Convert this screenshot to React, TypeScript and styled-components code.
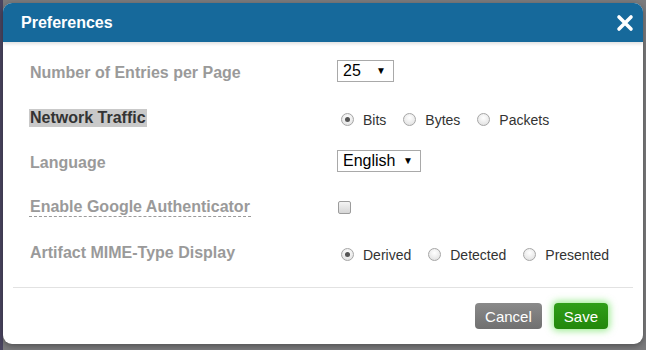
import React from "react";
import styled, { createGlobalStyle } from "styled-components";

const GlobalStyles = createGlobalStyle`
  html, body {
    margin: 0;
    padding: 0;
    background: #7b7b7d;
    font-family: "Liberation Sans", Arial, sans-serif;
  }
`;

const Backdrop = styled.div`
  width: 646px;
  height: 350px;
  padding: 3px;
  box-sizing: border-box;
  background: linear-gradient(to right, #4a4560 0, #4a4560 3px, #7b7b7d 3px);
`;

const Modal = styled.div`
  width: 640px;
  height: 341px;
  background: #ffffff;
  border-radius: 9px;
  display: flex;
  flex-direction: column;
  overflow: hidden;
  box-shadow: 0 2px 6px rgba(0, 0, 0, 0.35);
`;

const Header = styled.div`
  height: 39px;
  background: #16699b;
  display: flex;
  align-items: center;
  justify-content: space-between;
  padding: 0 8px 0 18px;
  box-shadow: 0 2px 3px rgba(0, 0, 0, 0.12);
`;

const Title = styled.h3`
  margin: 0;
  color: #ffffff;
  font-size: 16px;
  font-weight: bold;
`;

const CloseButton = styled.button`
  border: none;
  background: none;
  padding: 0;
  width: 20px;
  height: 20px;
  display: flex;
  align-items: center;
  justify-content: center;
  cursor: pointer;
`;

const Body = styled.div`
  padding: 8px 0 12px 26px;
  display: flex;
  flex-direction: column;
`;

const Row = styled.div`
  height: 45px;
  display: grid;
  grid-template-columns: 308px 1fr;
  align-items: center;
`;

const Label = styled.span<{ $highlight?: boolean; $dashed?: boolean }>`
  justify-self: start;
  font-size: 16px;
  font-weight: bold;
  color: ${(p) => (p.$highlight ? "#333333" : "#9a9a9a")};
  background: ${(p) => (p.$highlight ? "#c9c9c9" : "transparent")};
  padding: 0 1px;
  border-bottom: ${(p) => (p.$dashed ? "1px dashed #9a9a9a" : "none")};
  line-height: 18px;
`;

const Select = styled.div<{ $width: number }>`
  width: ${(p) => p.$width}px;
  height: 22px;
  box-sizing: border-box;
  border: 1px solid #a9a9a9;
  display: flex;
  align-items: center;
  justify-content: space-between;
  padding: 0 7px 0 5px;
  font-size: 16px;
  color: #000000;
  margin-top: -4px;
`;

const Arrow = styled.span`
  font-size: 10px;
  line-height: 1;
`;

const RadioGroup = styled.div`
  display: flex;
  align-items: center;
  gap: 17px;
  padding-left: 4px;
  margin-top: 5px;
`;

const Option = styled.label`
  display: flex;
  align-items: center;
  gap: 9px;
  font-size: 14px;
  color: #333333;
`;

const RadioDot = styled.span<{ $checked?: boolean }>`
  width: 13px;
  height: 13px;
  box-sizing: border-box;
  border-radius: 50%;
  border: 1px solid #a6a6a6;
  background: radial-gradient(circle at 50% 35%, #ffffff 0, #dcdcdc 100%);
  display: flex;
  align-items: center;
  justify-content: center;
  margin-top: -2px;

  &::after {
    content: "";
    display: ${(p) => (p.$checked ? "block" : "none")};
    width: 5px;
    height: 5px;
    border-radius: 50%;
    background: #555555;
  }
`;

const Checkbox = styled.span`
  width: 13px;
  height: 13px;
  box-sizing: border-box;
  border: 1px solid #9c9c9c;
  border-radius: 2px;
  background: linear-gradient(#f4f4f4, #d6d6d6);
  margin-left: 1px;
`;

const Footer = styled.div`
  margin: 0 10px;
  border-top: 1px solid #e2e2e2;
  flex: 1;
  display: flex;
  align-items: center;
  justify-content: flex-end;
  gap: 12px;
  padding-right: 25px;
`;

const Button = styled.button<{ $primary?: boolean }>`
  height: 26px;
  padding: 0 10px;
  border: none;
  border-radius: 4px;
  color: #ffffff;
  font-family: "Liberation Sans", Arial, sans-serif;
  font-size: 15px;
  background: ${(p) =>
    p.$primary
      ? "linear-gradient(#2f9e18, #23870c)"
      : "linear-gradient(#8a8a8a, #707070)"};
  box-shadow: ${(p) =>
    p.$primary ? "0 0 7px 2px rgba(80, 220, 60, 0.55)" : "none"};
  cursor: pointer;
`;

const RadioRow: React.FC<{ options: string[]; checked: string }> = ({
  options,
  checked,
}) => (
  <RadioGroup>
    {options.map((o) => (
      <Option key={o}>
        <RadioDot $checked={o === checked} />
        {o}
      </Option>
    ))}
  </RadioGroup>
);

const App: React.FC = () => {
  return (
    <>
      <GlobalStyles />
      <Backdrop>
        <Modal>
          <Header>
            <Title>Preferences</Title>
            <CloseButton aria-label="Close">
              <svg width="18" height="18" viewBox="0 0 18 18">
                <path
                  d="M3 3 L15 15 M15 3 L3 15"
                  stroke="#ffffff"
                  strokeWidth="3.6"
                  strokeLinecap="round"
                />
              </svg>
            </CloseButton>
          </Header>
          <Body>
            <Row>
              <Label>Number of Entries per Page</Label>
              <Select $width={57}>
                25 <Arrow>▼</Arrow>
              </Select>
            </Row>
            <Row>
              <Label $highlight>Network Traffic</Label>
              <RadioRow options={["Bits", "Bytes", "Packets"]} checked="Bits" />
            </Row>
            <Row>
              <Label>Language</Label>
              <Select $width={84}>
                English <Arrow>▼</Arrow>
              </Select>
            </Row>
            <Row>
              <Label $dashed>Enable Google Authenticator</Label>
              <Checkbox />
            </Row>
            <Row>
              <Label>Artifact MIME-Type Display</Label>
              <RadioRow
                options={["Derived", "Detected", "Presented"]}
                checked="Derived"
              />
            </Row>
          </Body>
          <Footer>
            <Button>Cancel</Button>
            <Button $primary>Save</Button>
          </Footer>
        </Modal>
      </Backdrop>
    </>
  );
};

export default App;
